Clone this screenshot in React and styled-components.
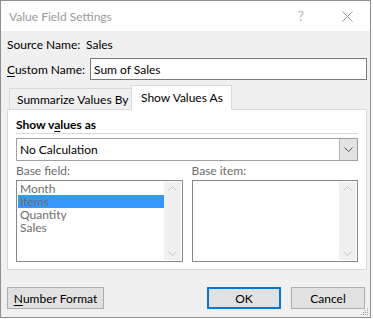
import React from 'react'
import styled, { createGlobalStyle } from 'styled-components'

const Global = createGlobalStyle`
  html, body {
    margin: 0;
    padding: 0;
    background: #fff;
  }
  body {
    font-family: Lato, "Noto Sans", sans-serif;
    font-size: 12px;
    color: #000;
  }
`

const Window = styled.div`
  position: relative;
  box-sizing: border-box;
  width: 371px;
  height: 318px;
  border: 1px solid #8f8f8f;
  display: flex;
  flex-direction: column;
  background: #f0f0f0;
`

const TitleBar = styled.div`
  height: 30px;
  background: #fff;
  display: flex;
  align-items: center;
  padding-left: 8px;
`

const Title = styled.div`
  flex: 1;
  color: #9a9a9a;
  font-size: 12px;
`

const TitleButton = styled.div`
  width: 46px;
  height: 30px;
  display: flex;
  align-items: center;
  justify-content: center;
  color: #b0b0b0;
  font-size: 13px;
`

const Body = styled.div`
  flex: 1;
  padding: 5px 3px 0 6px;
  display: flex;
  flex-direction: column;
`

const Row = styled.div`
  display: flex;
  align-items: center;
  white-space: nowrap;
  height: ${p => p.$h || 16}px;
  margin-top: ${p => p.$mt || 0}px;
`

const Label = styled.span`
  width: ${p => p.$w}px;
  flex-shrink: 0;
`

const Key = styled.span`
  text-decoration: underline;
  text-underline-offset: 2px;
`

const TextInput = styled.div`
  flex: 1;
  box-sizing: border-box;
  height: 22px;
  border: 1px solid #7a7a7a;
  background: #fff;
  padding-left: 3px;
  display: flex;
  align-items: center;
`

const TabStrip = styled.div`
  display: flex;
  align-items: flex-end;
  height: 24px;
  margin-top: 5px;
  padding-left: 2px;
  position: relative;
  z-index: 1;
`

const Tab = styled.div`
  box-sizing: border-box;
  width: ${p => p.$w}px;
  height: ${p => (p.$active ? 25 : 21)}px;
  margin-bottom: ${p => (p.$active ? -1 : 0)}px;
  padding: ${p => (p.$active ? '0 0 2px 9px' : '0 0 0 7px')};
  border: 1px solid #d9d9d9;
  border-bottom: none;
  border-right: ${p => (p.$active ? '1px solid #d9d9d9' : 'none')};
  background: ${p => (p.$active ? '#fff' : '#f0f0f0')};
  display: flex;
  align-items: center;
  white-space: nowrap;
`

const Panel = styled.div`
  box-sizing: border-box;
  width: 360px;
  height: 161px;
  border: 1px solid #d9d9d9;
  background: #fff;
  padding: 7px 8px 0 8px;
  display: flex;
  flex-direction: column;
`

const SectionTitle = styled.div`
  font-weight: bold;
  height: 16px;
  line-height: 16px;
  border-bottom: 1px solid #d8d8d8;
`

const Select = styled.div`
  box-sizing: border-box;
  height: 23px;
  margin-top: 4px;
  border: 1px solid #a0a0a0;
  display: flex;
  align-items: stretch;
`

const SelectValue = styled.div`
  flex: 1;
  padding-left: 3px;
  display: flex;
  align-items: center;
`

const SelectButton = styled.div`
  width: 17px;
  background: #e3e3e3;
  border-left: 1px solid #b4b4b4;
  display: flex;
  align-items: center;
  justify-content: center;
`

const Columns = styled.div`
  display: flex;
  gap: 9px;
  margin-top: 2px;
`

const Column = styled.div`
  flex: 1;
  display: flex;
  flex-direction: column;
`

const Dim = styled.div`
  color: #6d6d6d;
  height: 16px;
  line-height: 16px;
`

const ListBox = styled.div`
  box-sizing: border-box;
  height: 82px;
  margin-top: 1px;
  border: 1px solid #828790;
  display: flex;
  padding: 1px;
`

const Items = styled.div`
  flex: 1;
  display: flex;
  flex-direction: column;
`

const Item = styled.div`
  height: 13px;
  line-height: 13px;
  padding-left: 2px;
  color: #6d6d6d;
  overflow: hidden;
  background: ${p => (p.$selected ? '#3399ff' : 'transparent')};
`

const ScrollBar = styled.div`
  width: 17px;
  background: #f0f0f0;
  display: flex;
  flex-direction: column;
  justify-content: space-between;
  align-items: center;
  padding: 4px 0;
  box-sizing: border-box;
`

const Footer = styled.div`
  display: flex;
  align-items: center;
  margin-top: 17px;
  padding-right: 2px;
`

const Button = styled.div`
  box-sizing: border-box;
  width: ${p => p.$w}px;
  height: 22px;
  margin-left: ${p => p.$ml || 0}px;
  background: #e1e1e1;
  border: ${p => (p.$default ? '2px solid #0078d7' : '1px solid #adadad')};
  display: flex;
  align-items: center;
  justify-content: center;
  white-space: nowrap;
`

const Spacer = styled.div`
  flex: 1;
`

const Grip = styled.svg`
  position: absolute;
  right: 1px;
  bottom: 1px;
`

const Chevron = ({ up, color = '#c2c2c2' }) => (
  <svg width="9" height="5" viewBox="0 0 9 5">
    <path d={up ? 'M0.5 4.5 L4.5 0.5 L8.5 4.5' : 'M0.5 0.5 L4.5 4.5 L8.5 0.5'} fill="none" stroke={color} strokeWidth="1" />
  </svg>
)

const fields = ['Month', 'Items', 'Quantity', 'Sales']

export default function App() {
  return (
    <>
      <Global />
      <Window>
        <TitleBar>
          <Title>Value Field Settings</Title>
          <TitleButton>?</TitleButton>
          <TitleButton>
            <svg width="11" height="11" viewBox="0 0 11 11">
              <path d="M0.5 0.5 L10.5 10.5 M10.5 0.5 L0.5 10.5" stroke="#8a8a8a" strokeWidth="0.9" />
            </svg>
          </TitleButton>
        </TitleBar>
        <Body>
          <Row>
            <Label $w={79}>Source Name:</Label>
            <span>Sales</span>
          </Row>
          <Row $h={22} $mt={6}>
            <Label $w={83}><Key>C</Key>ustom Name:</Label>
            <TextInput>Sum of Sales</TextInput>
          </Row>
          <TabStrip>
            <Tab $w={122}>Summarize Values By</Tab>
            <Tab $w={101} $active>Show Values As</Tab>
          </TabStrip>
          <Panel>
            <SectionTitle>Show v<Key>a</Key>lues as</SectionTitle>
            <Select>
              <SelectValue>No Calculation</SelectValue>
              <SelectButton>
                <Chevron color="#555" />
              </SelectButton>
            </Select>
            <Columns>
              <Column>
                <Dim>Base field:</Dim>
                <ListBox>
                  <Items>
                    {fields.map(f => (
                      <Item key={f} $selected={f === 'Items'}>{f}</Item>
                    ))}
                  </Items>
                  <ScrollBar>
                    <Chevron up />
                    <Chevron />
                  </ScrollBar>
                </ListBox>
              </Column>
              <Column>
                <Dim>Base item:</Dim>
                <ListBox>
                  <Items />
                  <ScrollBar>
                    <Chevron up />
                    <Chevron />
                  </ScrollBar>
                </ListBox>
              </Column>
            </Columns>
          </Panel>
          <Footer>
            <Button $w={97}><Key>N</Key>umber Format</Button>
            <Spacer />
            <Button $w={74} $default>OK</Button>
            <Button $w={74} $ml={10}>Cancel</Button>
          </Footer>
        </Body>
        <Grip width="10" height="10" viewBox="0 0 10 10">
          <g fill="#a0a0a0">
            <rect x="8" y="2" width="1" height="1" />
            <rect x="6" y="4" width="1" height="1" />
            <rect x="8" y="4" width="1" height="1" />
            <rect x="4" y="6" width="1" height="1" />
            <rect x="6" y="6" width="1" height="1" />
            <rect x="8" y="6" width="1" height="1" />
            <rect x="2" y="8" width="1" height="1" />
            <rect x="4" y="8" width="1" height="1" />
            <rect x="6" y="8" width="1" height="1" />
            <rect x="8" y="8" width="1" height="1" />
          </g>
        </Grip>
      </Window>
    </>
  )
}
